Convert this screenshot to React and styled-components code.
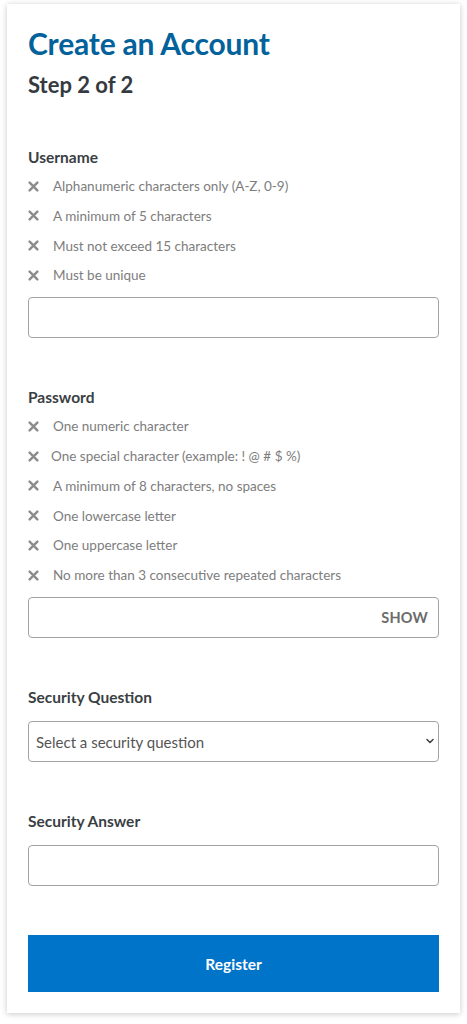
import React from "react";
import styled, { createGlobalStyle } from "styled-components";

const GlobalStyle = createGlobalStyle`
  html, body {
    margin: 0;
    padding: 0;
    background: #ffffff;
  }
  body {
    font-family: "Lato", "Noto Sans", "Liberation Sans", sans-serif;
  }
  * { box-sizing: border-box; }
`;

// card with soft shadow
const Card = styled.div`
  margin: 4px 7px 11px;
  background: #fff;
  box-shadow: 0 1px 6px rgba(0, 0, 0, 0.22);
  padding: 22px 21px 21px;
`;

const Title = styled.h1`
  margin: 0;
  font-size: 30px;
  line-height: 34px;
  font-weight: 700;
  color: #03629b;
  letter-spacing: -0.2px;
`;

const Step = styled.h2`
  margin: 11px 0 0;
  font-size: 22px;
  line-height: 28px;
  font-weight: 700;
  color: #343a40;
`;

const Field = styled.div`
  margin-top: ${p => p.$first ? "48px" : "49px"};
`;

const Label = styled.div`
  font-size: 15.5px;
  line-height: 20px;
  font-weight: 700;
  color: #3a3f44;
  margin-bottom: ${p => p.$tight ? "9px" : "14px"};
`;

const RuleList = styled.ul`
  list-style: none;
  margin: 0 0 12px;
  padding: 0;
  display: flex;
  flex-direction: column;
  gap: 9.75px;
`;

const Rule = styled.li`
  display: flex;
  align-items: center;
  height: 20px;
  font-size: 13.5px;
  color: #7d7d7d;
`;

const XMark = styled.svg`
  width: 11px;
  height: 11px;
  flex: none;
  margin-right: ${p => p.$shift ? "12px" : "14px"};
`;

const InputWrap = styled.div`
  position: relative;
`;

const TextInput = styled.input`
  display: block;
  width: 100%;
  height: 41px;
  border: 1px solid #a3a3a3;
  border-radius: 4px;
  padding: 0 60px 0 8px;
  font-size: 15px;
  font-family: inherit;
  background: #fff;
  outline: none;
`;

const ShowBtn = styled.button`
  position: absolute;
  right: 11px;
  top: 0;
  height: 41px;
  border: 0;
  background: none;
  padding: 0;
  font-family: inherit;
  font-size: 14.5px;
  font-weight: 700;
  color: #6b6b6b;
  letter-spacing: 0.2px;
`;

const Select = styled.select`
  display: block;
  width: 100%;
  height: 41px;
  border: 1px solid #a3a3a3;
  border-radius: 4px;
  padding: 0 24px 0 7px;
  font-family: inherit;
  font-size: 15px;
  color: #555;
  background: #fff;
  appearance: none;
  -webkit-appearance: none;
  outline: none;
`;

const Chevron = styled.svg`
  position: absolute;
  right: 5px;
  top: 17px;
  width: 8px;
  height: 6px;
  pointer-events: none;
`;

const RegisterButton = styled.button`
  display: block;
  width: 100%;
  height: 57px;
  margin-top: 49px;
  border: 0;
  background: #0074c8;
  color: #fff;
  font-family: inherit;
  font-size: 15.5px;
  font-weight: 700;
`;

function Cross({ shift }) {
  return (
    <XMark viewBox="0 0 10 10" $shift={shift}>
      <path d="M1.5 1.5 L8.5 8.5 M8.5 1.5 L1.5 8.5" stroke="#8c8c8c" strokeWidth="2.2" strokeLinecap="round" />
    </XMark>
  );
}

const usernameRules = [
  "Alphanumeric characters only (A-Z, 0-9)",
  "A minimum of 5 characters",
  "Must not exceed 15 characters",
  "Must be unique",
];

const passwordRules = [
  "One numeric character",
  "One special character (example: ! @ # $ %)",
  "A minimum of 8 characters, no spaces",
  "One lowercase letter",
  "One uppercase letter",
  "No more than 3 consecutive repeated characters",
];

export default function App() {
  return (
    <>
      <GlobalStyle />
      <Card>
        <Title>Create an Account</Title>
        <Step>Step 2 of 2</Step>

        <Field $first>
          <Label $tight>Username</Label>
          <RuleList>
            {usernameRules.map(r => (
              <Rule key={r}><Cross />{r}</Rule>
            ))}
          </RuleList>
          <TextInput type="text" />
        </Field>

        <Field>
          <Label $tight>Password</Label>
          <RuleList>
            {passwordRules.map((r, i) => (
              <Rule key={r}><Cross shift={i === 1} />{r}</Rule>
            ))}
          </RuleList>
          <InputWrap>
            <TextInput type="password" />
            <ShowBtn type="button">SHOW</ShowBtn>
          </InputWrap>
        </Field>

        <Field>
          <Label>Security Question</Label>
          <InputWrap>
            <Select defaultValue="">
              <option value="">Select a security question</option>
            </Select>
            <Chevron viewBox="0 0 8 6">
              <path d="M1 1.5 L4 4.5 L7 1.5" fill="none" stroke="#444" strokeWidth="1.6" strokeLinecap="round" strokeLinejoin="round" />
            </Chevron>
          </InputWrap>
        </Field>

        <Field>
          <Label>Security Answer</Label>
          <TextInput type="text" />
        </Field>

        <RegisterButton type="button">Register</RegisterButton>
      </Card>
    </>
  );
}
